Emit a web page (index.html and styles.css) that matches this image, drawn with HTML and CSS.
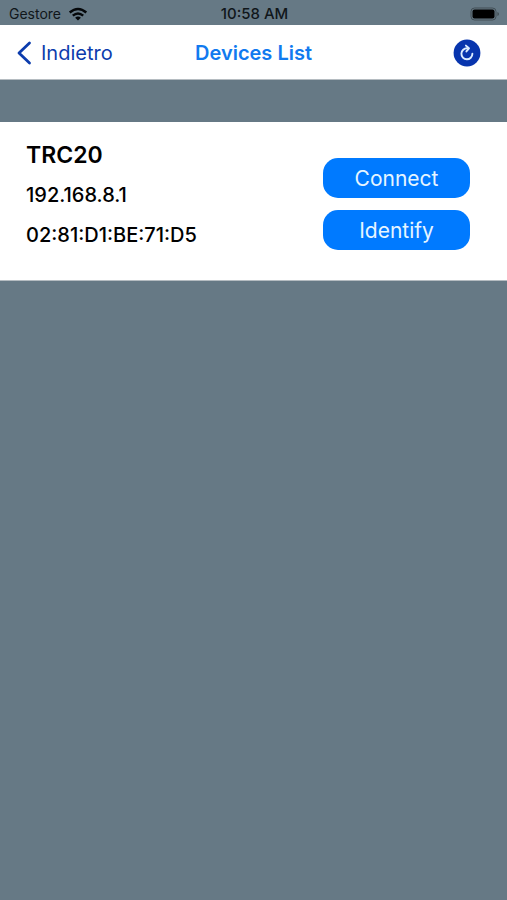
FILE: index.html
```html
<!DOCTYPE html>
<html lang="it">
<head>
<meta charset="utf-8">
<meta name="viewport" content="width=device-width, initial-scale=1">
<title>Devices List</title>
<link rel="stylesheet" href="styles.css">
</head>
<body>
<div class="status">
  <div class="carrier"><span>Gestore</span>
    <svg width="20" height="14" viewBox="0 0 20 14" aria-hidden="true"><path d="M10 13.6 7.1 10.7Q10 8.4 12.9 10.7Z" fill="#05080a"/><path d="M4.8 8.7Q10 4.2 15.2 8.7M1.7 5.5Q10-1.7 18.3 5.5" fill="none" stroke="#05080a" stroke-width="2.4"/></svg>
  </div>
  <time class="time">10:58 AM</time>
  <svg class="battery" width="30" height="14" viewBox="0 0 30 14" aria-hidden="true"><rect x="1" y="1" width="25" height="12" rx="3.5" fill="none" stroke="#424e55"/><rect x="2.5" y="2.5" width="22" height="9" rx="2" fill="#000"/><path d="M27.4 5v4q1.6-.6 1.6-2t-1.6-2Z" fill="#424e55"/></svg>
</div>
<header class="nav">
  <a class="back" href="#"><svg width="16" height="26" viewBox="0 0 16 26" aria-hidden="true"><path d="M13.5 3 3 13 13.5 23" fill="none" stroke="currentColor" stroke-width="2.8" stroke-linecap="round" stroke-linejoin="round"/></svg><span>Indietro</span></a>
  <h1 class="title">Devices List</h1>
  <button class="refresh" type="button" aria-label="Refresh"><svg width="28" height="28" viewBox="0 0 28 28" aria-hidden="true"><circle cx="14" cy="14" r="13.4" fill="#0835ae"/><path d="M14.2 9.3A5.5 5.5 0 1 0 19.4 14.8" fill="none" stroke="#dcecff" stroke-width="1.9" stroke-linecap="round"/><path d="M12.9 6.6 16 9.3 13.4 12.4" fill="none" stroke="#dcecff" stroke-width="1.9" stroke-linecap="round" stroke-linejoin="round"/></svg></button>
</header>
<main class="devices">
  <article class="device">
    <div class="info">
      <h2 class="name">TRC20</h2>
      <p class="detail">192.168.8.1</p>
      <p class="detail">02:81:D1:BE:71:D5</p>
    </div>
    <div class="actions">
      <button class="action" type="button">Connect</button>
      <button class="action" type="button">Identify</button>
    </div>
  </article>
</main>
</body>
</html>
```
FILE: styles.css
```css
* {
  box-sizing: border-box;
}

body {
  margin: 0;
  min-height: 100vh;
  background: #667985;
  color: #000;
  font-family: Inter, "Liberation Sans", sans-serif;
}

h1,
h2,
p {
  margin: 0;
}

.status,
.nav {
  display: grid;
  grid-template-columns: 1fr auto 1fr;
  align-items: center;
}

.status {
  height: 25px;
  padding: 2px 7px 0 9px;
  font-size: 14px;
  line-height: 20px;
  color: #10161a;
}

.carrier {
  display: flex;
  align-items: center;
  gap: 7px;
}

.time {
  font-size: 15px;
  font-weight: 500;
}

.battery {
  justify-self: end;
}

.nav {
  height: 55px;
  padding: 1px 16px 0;
  background: #fff;
  border-bottom: 1px solid #b5bcc1;
  font-size: 20px;
}

.back {
  display: flex;
  align-items: center;
  gap: 9px;
  color: #0c3cad;
  text-decoration: none;
}

.title {
  font-size: 20px;
  font-weight: 600;
  color: #117aef;
}

.refresh {
  display: flex;
  justify-self: end;
  margin-right: 10px;
  padding: 0;
  border: 0;
  background: none;
}

.devices {
  padding-top: 42px;
}

.device {
  display: flex;
  align-items: center;
  justify-content: space-between;
  padding: 13px 37px 25px 26px;
  background: #fff;
  border-bottom: 1px solid #b5bcc1;
}

.info {
  display: grid;
  line-height: 40px;
}

.name {
  font-size: 23px;
  font-weight: 600;
}

.detail {
  font-size: 20px;
  font-weight: 500;
}

.actions {
  display: grid;
  gap: 12px;
  width: 147px;
  padding-top: 18px;
}

.action {
  height: 40px;
  padding: 0;
  border: 0;
  border-radius: 15px;
  background: #007aff;
  color: #e6f5ff;
  font-family: inherit;
  font-size: 21px;
}
```
